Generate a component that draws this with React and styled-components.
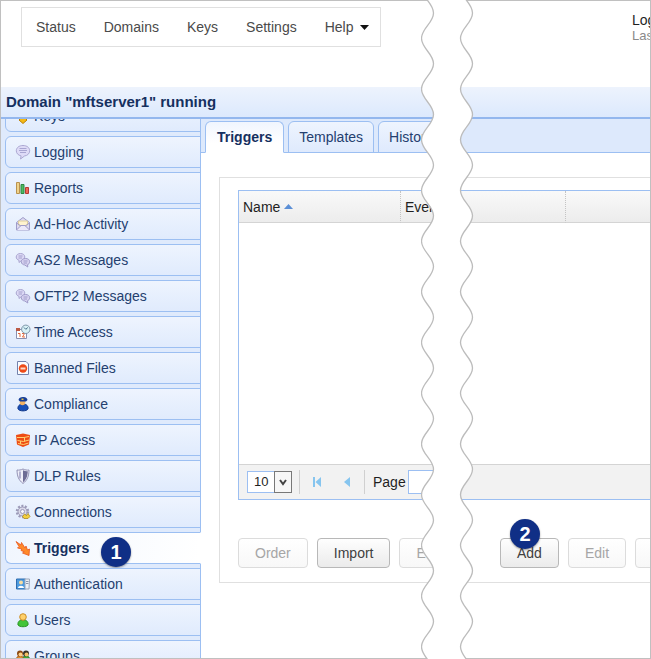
import React from 'react';
import styled, { createGlobalStyle, css } from 'styled-components';

const GlobalStyle = createGlobalStyle`

    *, *:before, *:after{
        box-sizing: border-box;
    }
    body{
        margin: 0;
        background: #ffffff;
        color: #1f1f1f;
        font: 14px/16px "Liberation Sans", Arial, sans-serif;
    }
    button, input, select{
        font: inherit;
        margin: 0;
    }

`;

// page frame

const Frame = styled.div`

    position: relative;
    height: 100vh;
    overflow: hidden;

`;

const Screen = styled.div`

    display: flex;
    flex-direction: column;
    height: 100%;
    border: 1px solid #c0c0c0;
    overflow: hidden;

`;

// top bar

const TopBar = styled.header`

    display: flex;
    justify-content: space-between;
    flex: none;
    height: 86px;
    padding: 6px 0 0 20px;

`;

const Menu = styled.nav`

    display: flex;
    align-items: center;
    flex: none;
    height: 40px;
    border: 1px solid #e0e0e0;

`;

const MenuLink = styled.a`

    display: flex;
    align-items: center;
    gap: 7px;
    padding: 0 14px;
    color: #4a4a4a;
    text-decoration: none;

    &:last-child{
        padding-right: 11px;
    }

`;

const LoginInfo = styled.div`

    width: 18px;
    padding-top: 5px;
    overflow: hidden;
    white-space: nowrap;

`;

const LastLogin = styled.div`

    color: #8a8a8a;
    font-size: 13px;
    line-height: 15px;

`;

const TitleBar = styled.h1`

    flex: none;
    height: 32px;
    margin: 0;
    padding: 0 5px;
    background: linear-gradient(#edf3fd, #dce9fd);
    border-bottom: 2px solid #93b7ee;
    color: #15305f;
    font-size: 15px;
    line-height: 30px;

`;

const Main = styled.div`

    display: flex;
    flex: 1;
    min-height: 0;

`;

// side menu

const Side = styled.nav`

    flex: none;
    width: 200px;
    padding-left: 4px;
    background: linear-gradient(#9cbff2, #9cbff2) right / 1px 100% no-repeat #dfeafc;
    overflow: hidden;

`;

const SideList = styled.ul`

    display: flex;
    flex-direction: column;
    gap: 4px;
    margin: -19px 0 0;
    padding: 0;
    list-style: none;

`;

const SideItem = styled.li`

    position: relative;

`;

const SideLink = styled.a`

    display: flex;
    align-items: center;
    gap: 3px;
    height: 32px;
    padding-left: 9px;
    border: 1px solid #9cbff2;
    border-radius: 6px 0 0 6px;
    background: linear-gradient(#eef4fe, #e0ebfd);
    color: #24406f;
    text-decoration: none;

    ${ props => props.$active && css`
        border-right-color: #ffffff;
        background: linear-gradient(to right, #f1f6fe, #ffffff);
        color: #15305f;
        font-weight: bold;
    ` }

    svg{
        flex: none;
    }

`;

// content

const Content = styled.main`

    display: flex;
    flex-direction: column;
    flex: 1;
    min-width: 0;

`;

const TabStrip = styled.div`

    display: flex;
    align-items: flex-end;
    gap: 4px;
    flex: none;
    height: 34px;
    padding-left: 4px;
    background: linear-gradient(#9cbff2, #9cbff2) bottom / 100% 1px no-repeat #dde9fc;

`;

const Tab = styled.button`

    height: 32px;
    padding: 0 11px;
    border: 1px solid #9cbff2;
    border-radius: 6px 6px 0 0;
    background: linear-gradient(#eef4fe, #dfeafd);
    color: #24406f;

    ${ props => props.$active && css`
        border-bottom-color: #ffffff;
        background: linear-gradient(#f0f5fe, #ffffff 70%);
        color: #15305f;
        font-weight: bold;
    ` }

    &:not(:first-child){
        padding: 0 10px;
    }

`;

const Panel = styled.section`

    margin: 24px 0 0 18px;
    padding: 12px 0 14px 18px;
    border: 1px solid #e0e0e0;
    border-right: 0;

`;

const Grid = styled.div`

    border: 1px solid #9cbff2;
    border-right: 0;

`;

const Table = styled.table`

    width: 100%;
    table-layout: fixed;
    border-collapse: separate;
    border-spacing: 0;

`;

const HeadCell = styled.th`

    width: ${ props => props.$width || 'auto' };
    height: 32px;
    padding: 0 4px;
    background: linear-gradient(#f9f9f9, #ececec);
    border-bottom: 1px solid #d4d4d4;
    border-right: ${ props => props.$width ? '1px dotted #c4c4c4' : '0' };
    font-weight: normal;
    text-align: left;

    svg{
        margin-left: 4px;
        vertical-align: 3px;
    }

`;

const Rows = styled.div`

    min-height: 241px;

`;

const Pager = styled.div`

    display: flex;
    align-items: center;
    height: 35px;
    padding-left: 8px;
    border-top: 1px solid #d4d4d4;
    background: #f2f2f2;

`;

const SizeBox = styled.div`

    display: grid;
    flex: none;
    width: 45px;
    height: 22px;

    & > *{
        grid-area: 1 / 1;
    }

`;

const SizeSelect = styled.select`

    appearance: none;
    padding: 0 6px;
    border: 1px solid #9cbff2;
    border-radius: 0;
    background: #ffffff;
    color: #1f1f1f;
    font-size: 13px;

`;

const SizeArrow = styled.span`

    display: flex;
    align-items: center;
    justify-content: center;
    justify-self: end;
    width: 18px;
    border: 1px solid #787878;
    background: #f7f7f7;
    pointer-events: none;

`;

const Divider = styled.span`

    width: 1px;
    height: 24px;
    margin: 0 7px;
    background: #d0d0d0;

`;

const PageButton = styled.button`

    display: flex;
    align-items: center;
    justify-content: center;
    width: 20px;
    height: 24px;
    padding: 0;
    border: 0;
    background: transparent;

`;

const PageButtons = styled.div`

    display: flex;
    gap: 10px;

`;

const PageLabel = styled.label`

    display: flex;
    align-items: center;
    gap: 2px;
    padding-left: 1px;

`;

const PageInput = styled.input`

    width: 50px;
    height: 24px;
    padding: 0;
    border: 1px solid #9cbff2;
    background: #ffffff;
    text-align: center;

`;

const Actions = styled.div`

    display: flex;
    margin-top: 38px;

`;

const ActionGroup = styled.div`

    display: flex;
    flex: none;
    gap: 9px;
    width: ${ props => props.$width || 'auto' };

`;

const ActionButton = styled.button`

    flex: none;
    height: 30px;
    padding: 0 16px;
    border: 1px solid #b8b8b8;
    border-radius: 4px;
    background: linear-gradient(#fefefe, #ebebeb);
    color: #404040;

    &:disabled{
        border-color: #dcdcdc;
        background: linear-gradient(#ffffff, #f8f8f8);
        color: #a6a6a6;
    }

`;

// overlays

const Tear = styled.svg`

    position: absolute;
    top: 0;
    left: 421px;
    width: 53px;
    height: 100%;
    overflow: hidden;
    pointer-events: none;

`;

const Anchor = styled.span`

    position: relative;
    display: flex;

`;

const Step = styled.span`

    position: absolute;
    top: ${ props => props.$top };
    left: ${ props => props.$left };
    width: 30px;
    height: 30px;
    border-radius: 50%;
    background: #102f86;
    box-shadow: 0 1px 2px rgba(0, 0, 0, .4);
    color: #ffffff;
    font-size: 20px;
    font-weight: bold;
    line-height: 30px;
    text-align: center;

`;

// icons, all on a 16 x 16 box

const icons = {
    keys: <>
        <path d="M8 8 12 12 8 15.500 4 12Z" fill="#f5b914" stroke="#b97e08" />
        <circle cx="8" cy="6" r="4" fill="#f7cb46" stroke="#b97e08" />
    </>,
    logging: <>
        <path d="M8 1.500c4 0 6.700 2.200 6.700 5.300 0 2.700-2.200 4.800-5.200 5.200L5.500 15l.6-3.100C3.300 11.300 1.300 9.400 1.300 6.800c0-3.100 2.700-5.300 6.700-5.300Z" fill="#dedbf7" stroke="#aca8d2" />
        <path d="M4.500 4.500h7M4 6.500h8M5 8.500h6" stroke="#9c98c8" strokeWidth=".8" fill="none" />
    </>,
    reports: <>
        <path d="M1.500 2.500h3v11h-3z" fill="#efd28a" stroke="#b9924f" />
        <path d="M6 4.500h3v9H6z" fill="#4dbb62" stroke="#2e8745" />
        <path d="M10.500 7.500h3v6h-3z" fill="#f0675b" stroke="#b53a33" />
    </>,
    mail: <>
        <path d="M1.500 6.500 8 1.500l6.500 5v7.500h-13Z" fill="#dddaf3" stroke="#9f9cc8" />
        <path d="M3.500 5h9v4L8 11 3.500 9Z" fill="#fff3cf" stroke="#e0d09d" />
        <path d="M1.500 14 6 9.500h4l4.500 4.500M1.500 7 6 10M14.500 7 10 10" fill="#ece9fa" stroke="#9f9cc8" />
    </>,
    messages: <>
        <path d="M5.500 1.500c2.500 0 4.300 1.400 4.300 3.500S8 8.500 6.500 8.500L4 10.500V8.300C2.300 7.800 1.200 6.600 1.200 5c0-2.100 1.800-3.500 4.300-3.500Z" fill="#dcd9f5" stroke="#aaa6d0" />
        <path d="M10.500 6.500c2.500 0 4.200 1.300 4.200 3.200 0 1.500-1 2.600-2.200 3l.3 2.300-3-2c-2-.2-3.500-1.400-3.500-3.300s1.700-3.200 4.200-3.200Z" fill="#d6d2f0" stroke="#9f9bc9" />
        <path d="M3.500 4h4M3.500 6h3.500M8.500 9h4M8.500 11h3.500" stroke="#9591c2" strokeWidth=".8" fill="none" />
    </>,
    time: <>
        <path d="M1.500 5.500h10v9h-10z" fill="#ffffff" stroke="#8a8fae" />
        <path d="M1 4h4v3H1z" fill="#bb5a45" />
        <path d="M3 9.500h2v3.500M7 9.500h2.500L7.500 13H10" fill="none" stroke="#e4673a" />
        <circle cx="10.800" cy="5.300" r="4.200" fill="#d8f1f6" stroke="#7d94a8" />
        <path d="M9 3.500l1.800 1.800 2-1.800" fill="none" stroke="#436b86" />
    </>,
    banned: <>
        <path d="M2.500 1.500h8.500l2.500 2.500v10.500h-11z" fill="#fafcff" stroke="#7482ad" />
        <circle cx="8" cy="8.500" r="4.200" fill="#ed4a18" />
        <path d="M5.500 7.500h5v2h-5z" fill="#ffd9c7" />
    </>,
    officer: <>
        <path d="M3 13c-.5-3 1.500-5 5-5s5.500 2 5 5c-1.500 2.500-8.500 2.500-10 0Z" fill="#1950b8" stroke="#123a8d" />
        <circle cx="7.500" cy="6.500" r="2.800" fill="#f2b265" />
        <path d="M3.500 4C4 1.500 6 .8 8.500 1c2.500 0 4 1.500 4 3L11 5.500H5Z" fill="#173f98" />
        <path d="M6.500 2.500h2V4h-2z" fill="#e6c040" />
    </>,
    firewall: <>
        <path d="M1 3 8 1.500 15 3l-1 9.500-6 2.500-6-2.500Z" fill="#ee4c13" />
        <path d="M2 5.500h7l5-1M2.500 8.500l6 1 5.500-1.500M3 11.500l5.500 1 5-1.500M9.500 5.500v4M5.500 9v3" fill="none" stroke="#ffcf70" />
    </>,
    shield: <>
        <path d="M8 1c2 1 4 1.300 6 1-.1 6-1.500 10-6 13.500C3.500 12 2.100 8 2 2c2 .3 4 0 6-1Z" fill="#eeeef9" stroke="#9291b4" />
        <path d="M8 2.300c1.500.8 3 1 4.800.9C12.500 8 11.500 11.500 8 14.200Z" fill="#6c6b94" />
        <path d="M5 3.500v7" stroke="#b2b1d0" strokeWidth="2" />
    </>,
    gear: <>
        <circle cx="7.500" cy="7.500" r="5.500" fill="none" stroke="#9c9ab8" strokeWidth="2.500" strokeDasharray="2 1.450" />
        <circle cx="7.500" cy="7.500" r="4.500" fill="#d9d8e9" stroke="#9c9ab8" />
        <circle cx="7.500" cy="7.500" r="2" fill="#f6f7fd" stroke="#9c9ab8" />
        <path d="M7.500 12.500 9.500 10l2 1.500 1.500-2 2 3-2 2H9Z" fill="#f4cf3e" stroke="#a98a20" strokeWidth=".8" />
    </>,
    trigger: <path d="M1 1.500 6 5l.5-2.500L10 8l1-2 1.500 4 2-1L14 15.500 7.500 13l1.800-1.200L6 10.500l.8-1.500L2.500 8l1.500-1.500Z" fill="#ff8a2a" stroke="#e9571d" strokeWidth=".8" />,
    card: <>
        <path d="M1.500 3h9v10h-9z" fill="#4c9be0" stroke="#2f6cae" />
        <path d="M10 3h4.500l-.5 10h-4z" fill="#edf1f7" stroke="#9aa5b8" />
        <circle cx="6" cy="6.500" r="2" fill="#f8dda2" />
        <path d="M3 12c.3-3 5.700-3 6 0Z" fill="#ffffff" />
        <path d="M11 5.500h2.500M11 7.500h2.500" stroke="#8a94a8" />
    </>,
    user: <>
        <path d="M3 13c-.5-3.500 1.500-5 5-5s5.500 1.500 5 5c-1.500 2.300-8.500 2.300-10 0Z" fill="#43c438" stroke="#289225" />
        <circle cx="8" cy="5" r="3.300" fill="#ffd06a" stroke="#cb8f2a" />
    </>,
    group: <>
        <path d="M7 13c0-3 1-5 4-5s4 2 4 5Z" fill="#38ac35" stroke="#227a20" />
        <circle cx="11" cy="5.500" r="3" fill="#3a3325" />
        <circle cx="11.500" cy="6.500" r="2" fill="#f2c064" />
        <path d="M1 13c0-3 1-5 4-5s4 2 4 5Z" fill="#e08a2c" stroke="#a55b14" />
        <circle cx="5" cy="5.500" r="3" fill="#8b4a14" />
        <circle cx="5.500" cy="6.500" r="2" fill="#ffd083" />
    </>,
};

function Icon({ name }){
    return(
        <svg width="16" height="16" viewBox="0 0 16 16" aria-hidden="true">{ icons[name] }</svg>
    )
}

const sideItems = [
    { icon: 'keys', label: 'Keys' },
    { icon: 'logging', label: 'Logging' },
    { icon: 'reports', label: 'Reports' },
    { icon: 'mail', label: 'Ad-Hoc Activity' },
    { icon: 'messages', label: 'AS2 Messages' },
    { icon: 'messages', label: 'OFTP2 Messages' },
    { icon: 'time', label: 'Time Access' },
    { icon: 'banned', label: 'Banned Files' },
    { icon: 'officer', label: 'Compliance' },
    { icon: 'firewall', label: 'IP Access' },
    { icon: 'shield', label: 'DLP Rules' },
    { icon: 'gear', label: 'Connections' },
    { icon: 'trigger', label: 'Triggers', active: true, step: 1 },
    { icon: 'card', label: 'Authentication' },
    { icon: 'user', label: 'Users' },
    { icon: 'group', label: 'Groups' },
];

// one wave is 50.7 high and swings 12 to the left and back
const wave = 'c0 10 -12 15.350 -12 25.350 c0 10 12 15.350 12 25.350 ';
const waveBack = 'c0 -10 -12 -15.350 -12 -25.350 c0 -10 12 -15.350 12 -25.350 ';
const waves = 40;
const waveTop = -37.7;
const edge = x => `M${ x } ${ waveTop }` + wave.repeat(waves);

function TearLine(){
    return(
        <Tear aria-hidden="true">
            <path d={ edge(12.5) + 'h39 ' + waveBack.repeat(waves) + 'Z' } fill="#ffffff" />
            <path d={ edge(12.5) } fill="none" stroke="#bcbcbc" strokeWidth="1.300" />
            <path d={ edge(51.5) } fill="none" stroke="#bcbcbc" strokeWidth="1.300" />
        </Tear>
    )
}

function App(){

    return(
        <>
            <GlobalStyle />
            <Frame>
                <Screen>
                    <TopBar>
                        <Menu>
                            <MenuLink href="#status">Status</MenuLink>
                            <MenuLink href="#domains">Domains</MenuLink>
                            <MenuLink href="#keys">Keys</MenuLink>
                            <MenuLink href="#settings">Settings</MenuLink>
                            <MenuLink href="#help">
                                Help
                                <svg width="9" height="5" viewBox="0 0 9 5" aria-hidden="true"><path d="M0 0h9L4.500 5Z" fill="#111111" /></svg>
                            </MenuLink>
                        </Menu>
                        <LoginInfo>
                            <div>Log</div>
                            <LastLogin>Las</LastLogin>
                        </LoginInfo>
                    </TopBar>
                    <TitleBar>Domain "mftserver1" running</TitleBar>
                    <Main>
                        <Side>
                            <SideList>
                                { sideItems.map(item => (
                                    <SideItem key={ item.label }>
                                        <SideLink href={ '#' + item.icon } $active={ item.active }>
                                            <Icon name={ item.icon } />
                                            { item.label }
                                        </SideLink>
                                        { item.step && <Step $top="5px" $left="96px">{ item.step }</Step> }
                                    </SideItem>
                                )) }
                            </SideList>
                        </Side>
                        <Content>
                            <TabStrip role="tablist">
                                <Tab type="button" role="tab" aria-selected="true" $active>Triggers</Tab>
                                <Tab type="button" role="tab">Templates</Tab>
                                <Tab type="button" role="tab">History</Tab>
                            </TabStrip>
                            <Panel>
                                <Grid>
                                    <Table>
                                        <thead>
                                            <tr>
                                                <HeadCell scope="col" $width="162px">
                                                    Name
                                                    <svg width="9" height="5" viewBox="0 0 9 5" aria-hidden="true"><path d="M0 5 4.500 0 9 5Z" fill="#5b8fd6" /></svg>
                                                </HeadCell>
                                                <HeadCell scope="col" $width="165px">Event</HeadCell>
                                                <HeadCell as="td" />
                                            </tr>
                                        </thead>
                                    </Table>
                                    <Rows />
                                    <Pager>
                                        <SizeBox>
                                            <SizeSelect aria-label="Rows per page" defaultValue="10">
                                                <option>10</option>
                                            </SizeSelect>
                                            <SizeArrow>
                                                <svg width="8" height="7" viewBox="0 0 8 7" aria-hidden="true"><path d="M1 1l3 4 3-4" fill="none" stroke="#444444" strokeWidth="2" /></svg>
                                            </SizeArrow>
                                        </SizeBox>
                                        <Divider />
                                        <PageButtons>
                                            <PageButton type="button" aria-label="First page">
                                                <svg width="10" height="10" viewBox="0 0 10 10"><path d="M1 0h2v10H1zM9 0v10L3.500 5Z" fill="#86c5ef" /></svg>
                                            </PageButton>
                                            <PageButton type="button" aria-label="Previous page">
                                                <svg width="10" height="10" viewBox="0 0 10 10"><path d="M8 0v10L2 5Z" fill="#86c5ef" /></svg>
                                            </PageButton>
                                        </PageButtons>
                                        <Divider />
                                        <PageLabel>
                                            Page
                                            <PageInput type="text" defaultValue="1" />
                                        </PageLabel>
                                    </Pager>
                                </Grid>
                                <Actions>
                                    <ActionGroup $width="262px">
                                        <ActionButton type="button" disabled>Order</ActionButton>
                                        <ActionButton type="button">Import</ActionButton>
                                        <ActionButton type="button" disabled aria-label="Export">E</ActionButton>
                                    </ActionGroup>
                                    <ActionGroup>
                                        <Anchor>
                                            <ActionButton type="button">Add</ActionButton>
                                            <Step $top="-19px" $left="10px">2</Step>
                                        </Anchor>
                                        <ActionButton type="button" disabled>Edit</ActionButton>
                                        <ActionButton type="button" disabled aria-label="Delete" />
                                    </ActionGroup>
                                </Actions>
                            </Panel>
                        </Content>
                    </Main>
                </Screen>
                <TearLine />
            </Frame>
        </>
    )

}

export default App;
